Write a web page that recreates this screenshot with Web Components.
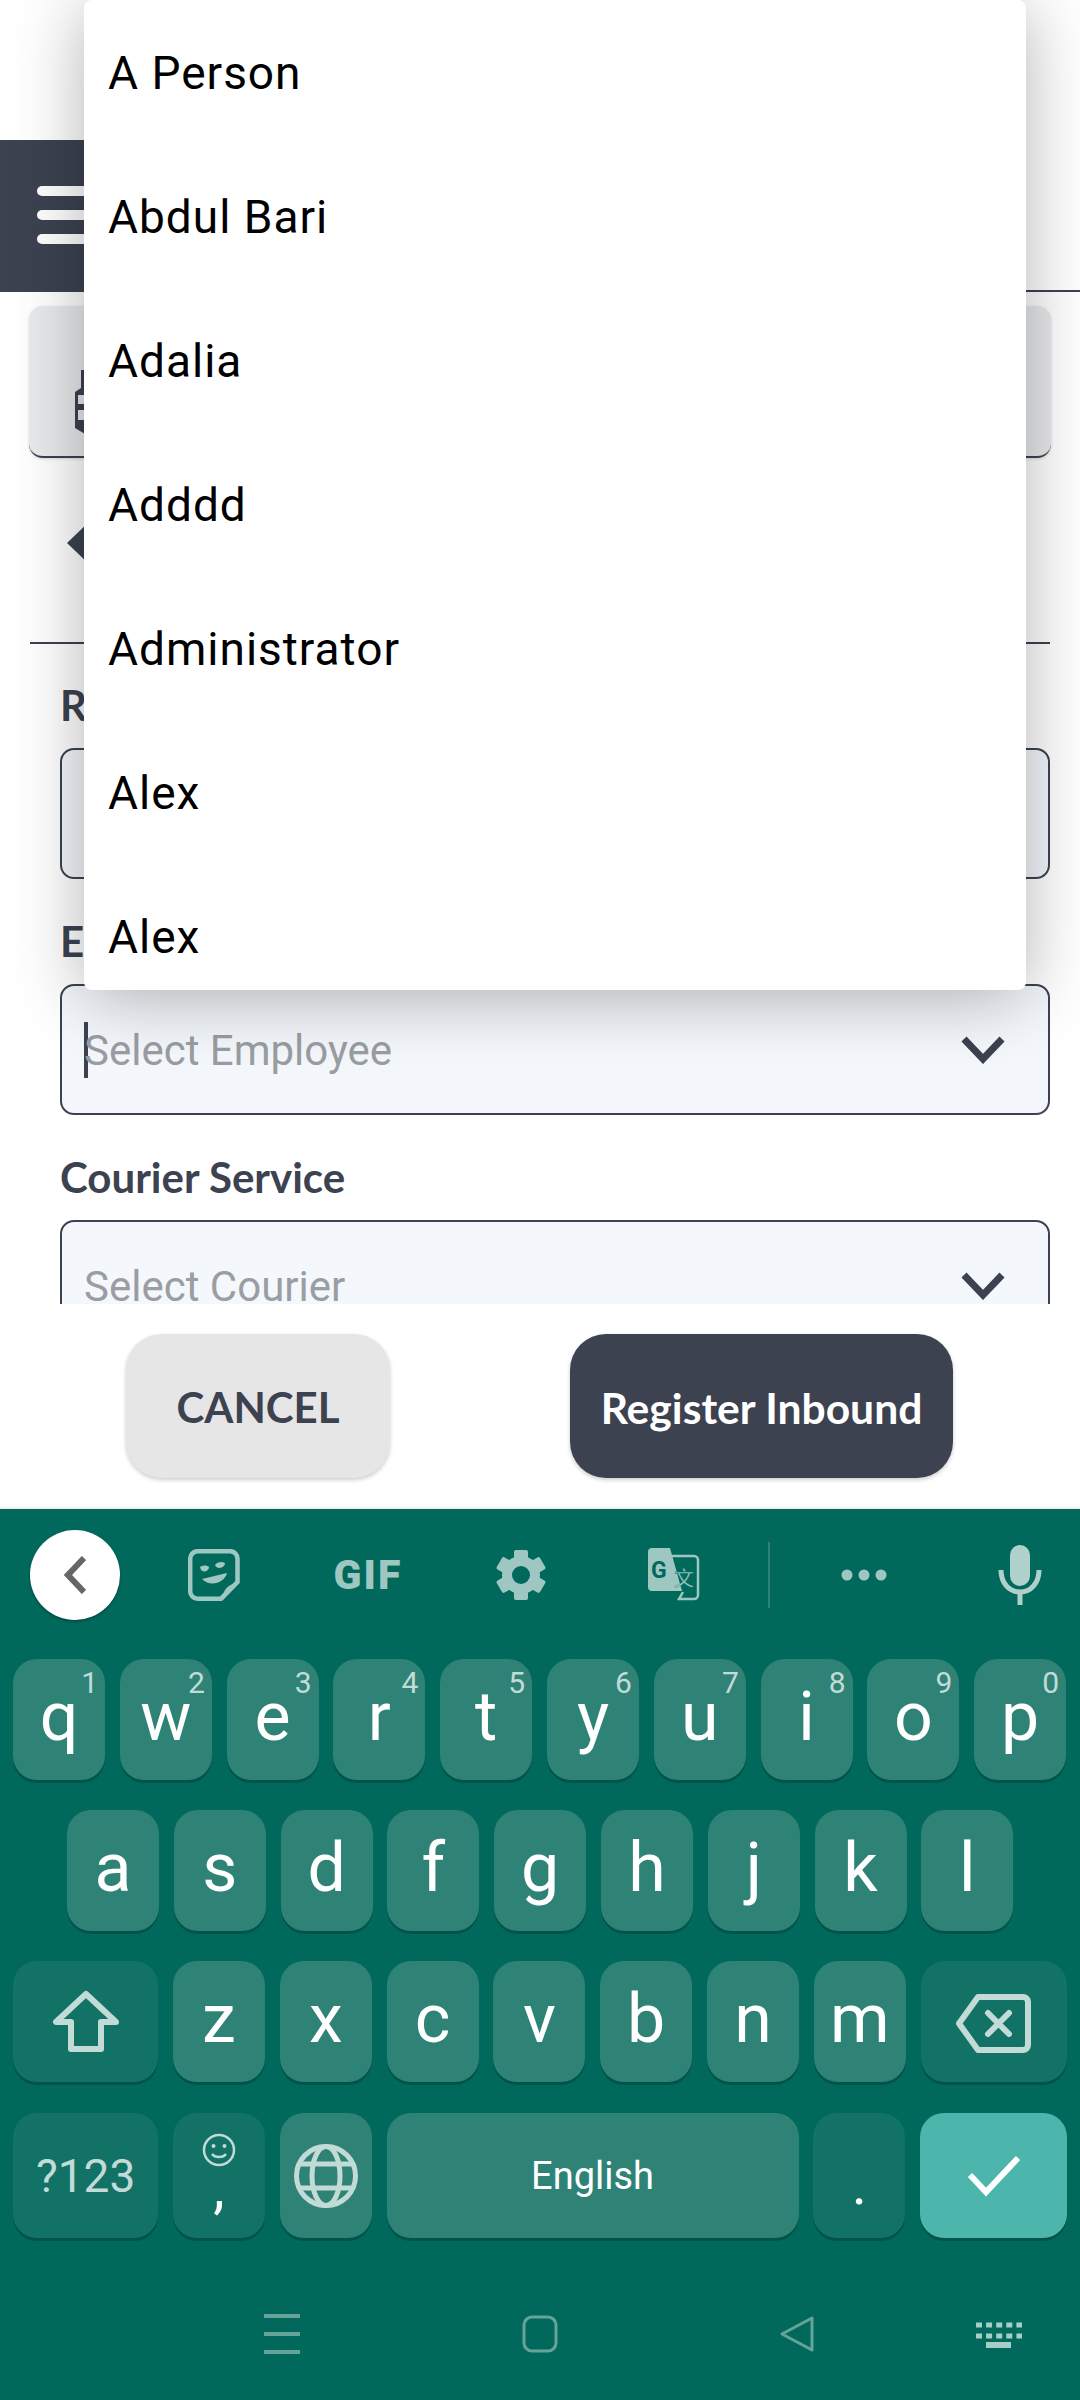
<!DOCTYPE html>
<html>
<head>
<meta charset="utf-8">
<title>Register Inbound</title>
<style>
  html, body { margin: 0; padding: 0; background: #fff; }
  body { width: 1080px; height: 2400px; position: relative; overflow: hidden; font-family: Roboto, sans-serif; }
</style>
</head>
<body>
<inbound-form>
  <form-field label="R"></form-field>
  <form-field label="E" placeholder="Select Employee" focused chevron></form-field>
  <form-field label="Courier Service" placeholder="Select Courier" chevron></form-field>
</inbound-form>

<people-dropdown>
  <people-option>A Person</people-option>
  <people-option>Abdul Bari</people-option>
  <people-option>Adalia</people-option>
  <people-option>Adddd</people-option>
  <people-option>Administrator</people-option>
  <people-option>Alex</people-option>
  <people-option>Alex</people-option>
</people-dropdown>

<soft-keyboard></soft-keyboard>

<script>
class InboundForm extends HTMLElement {
  constructor() {
    super();
    this.attachShadow({ mode: "open" });
    this.shadowRoot.innerHTML = `
      <style>
        :host { display: flex; flex-direction: column; height: 1509px; background: #fff; font-family: Lato, sans-serif; }
        .scroll { height: 1304px; overflow: hidden; padding-top: 140px; box-sizing: border-box; }
        .head { height: 152px; border-bottom: 2px solid #3c4250; box-sizing: border-box; }
        .burger { width: 128px; height: 150px; background: #3c4250; display: flex; flex-direction: column; gap: 14px; padding: 46px 0 0 37px; box-sizing: border-box; }
        .burger i { display: block; width: 80px; height: 10px; border-radius: 5px; background: #fff; }
        .card { height: 152px; margin: 14px 29px 0; background: #e8eaec; border-radius: 14px; border-bottom: 2px solid #3c4250; box-sizing: border-box; box-shadow: 0 1px 3px rgba(0,0,0,.15); padding: 64px 0 0 46px; }
        .card svg { display: block; }
        .back { height: 186px; margin: 0 30px; border-bottom: 2px solid #3c4250; box-sizing: border-box; padding: 62px 0 0 37px; }
        .back i { display: block; width: 0; height: 0; border-style: solid; border-width: 23px 24px 23px 0; border-color: transparent #3c4250 transparent transparent; }
        .fields { padding: 18px 30px 0 60px; display: flex; flex-direction: column; gap: 19px; }
        .foot { flex: 1; display: flex; padding: 30px 0 0 126px; gap: 180px; align-items: flex-start; }
        .btn { height: 144px; border-radius: 36px; display: flex; align-items: center; justify-content: center; font-weight: 700; box-shadow: 0 2px 4px rgba(0,0,0,.2); box-sizing: border-box; padding-top: 2px; }
        .cancel { width: 264px; background: #e6e6e6; color: #3c4250; font-size: 42px; }
        .save { width: 383px; background: #3c4250; color: #fff; font-size: 42.6px; }
      </style>
      <div class="scroll">
        <div class="head"><div class="burger"><i></i><i></i><i></i></div></div>
        <div class="card">
          <svg width="60" height="64" viewBox="0 0 60 64"><path d="M6 0h6v18h20v46H10L0 58V22l6-4z" fill="#3c4250"/><path d="M3 25h30v9H3zM3 40h30v10H3z" fill="#e8eaec"/></svg>
        </div>
        <div class="back"><i></i></div>
        <div class="fields"><slot></slot></div>
      </div>
      <div class="foot">
        <div class="btn cancel">CANCEL</div>
        <div class="btn save">Register Inbound</div>
      </div>
    `;
  }
}

class FormField extends HTMLElement {
  constructor() {
    super();
    this.attachShadow({ mode: "open" });
  }

  connectedCallback() {
    const label = this.getAttribute("label") || "";
    const placeholder = this.getAttribute("placeholder") || "";
    const chevron = this.hasAttribute("chevron")
      ? `<svg class="chev" width="44" height="28" viewBox="0 0 44 28"><path d="M3 3l19 20L41 3" fill="none" stroke="#3c4250" stroke-width="7"/></svg>`
      : "";
    const caret = this.hasAttribute("focused") ? `<i class="caret"></i>` : "";
    this.shadowRoot.innerHTML = `
      <style>
        :host { display: block; }
        .label { height: 86px; line-height: 86px; font-size: 42px; font-weight: 700; color: #3c4250; font-family: Lato, sans-serif; }
        .box { height: 131px; box-sizing: border-box; border: 2px solid #3c4250; border-radius: 14px; background: #f4f8fc; display: flex; align-items: center; padding: 0 43px 0 22px; font-family: Roboto, sans-serif; }
        .ph { flex: 1; font-size: 42px; color: #9a9ea2; padding-top: 2px; }
        .caret { display: block; width: 4px; height: 56px; background: #3c4250; margin-right: -4px; }
      </style>
      <div class="label">${label}</div>
      <div class="box">${caret}<span class="ph">${placeholder}</span>${chevron}</div>
    `;
  }
}

class PeopleDropdown extends HTMLElement {
  constructor() {
    super();
    this.attachShadow({ mode: "open" });
    this.shadowRoot.innerHTML = `
      <style>
        :host { display: block; position: absolute; left: 84px; top: 0; width: 942px; height: 990px; background: #fff; border-radius: 8px; box-shadow: 0 8px 70px rgba(0,0,0,.3); overflow: hidden; padding-top: 1px; box-sizing: border-box; }
      </style>
      <slot></slot>
    `;
  }
}

class PeopleOption extends HTMLElement {
  constructor() {
    super();
    this.attachShadow({ mode: "open" });
    this.shadowRoot.innerHTML = `
      <style>
        :host { display: flex; align-items: center; height: 144px; padding-left: 24px; font-family: Roboto, sans-serif; font-size: 46px; letter-spacing: 1px; color: #000; box-sizing: border-box; }
      </style>
      <slot></slot>
    `;
  }
}

class KbKey extends HTMLElement {
  constructor() {
    super();
    this.attachShadow({ mode: "open" });
  }

  connectedCallback() {
    const hint = this.getAttribute("hint");
    const w = this.getAttribute("w") || "92";
    this.shadowRoot.innerHTML = `
      <style>
        :host { display: flex; align-items: center; justify-content: center; position: relative; flex: none; height: 100%; width: ${w}px; box-sizing: border-box; border-radius: 24px; background: #2e8376; box-shadow: 0 3px 0 #00544a; color: #fff; font-family: Roboto, sans-serif; font-size: 68px; line-height: 1; padding-bottom: 6px; }
        :host([flat]) { padding-bottom: 0; }
        :host([kind="dark"]) { background: #127265; }
        :host([kind="accent"]) { background: #4db6ac; }
        .hint { position: absolute; top: 9px; right: 7px; font-size: 30px; color: #c2dbd7; line-height: 1; }
      </style>
      <slot></slot>
      ${hint ? `<span class="hint">${hint}</span>` : ""}
    `;
  }
}

class SoftKeyboard extends HTMLElement {
  constructor() {
    super();
    this.attachShadow({ mode: "open" });
  }

  _row(letters, hints) {
    return letters
      .split("")
      .map((ch, i) => `<kb-key ${hints ? `hint="${hints[i]}"` : ""}>${ch}</kb-key>`)
      .join("");
  }

  connectedCallback() {
    const tool = "#9fc7c1";
    const keyIcon = "#c2dbd7";
    const nav = "#66a398";
    this.shadowRoot.innerHTML = `
      <style>
        :host { display: block; height: 891px; background: #00695c; box-shadow: 0 -1px 3px rgba(0,0,0,.12); font-family: Roboto, sans-serif; }
        .tools { height: 150px; box-sizing: border-box; padding: 21px 0 0 30px; display: grid; grid-template-columns: 90px 187px 122px 184px 123px 66px 123px 56px 78px; grid-template-rows: 90px; }
        .tools > * { justify-self: center; align-self: center; }
        .round { width: 90px; height: 90px; border-radius: 50%; background: #fff; box-shadow: 0 2px 3px rgba(0,0,0,.25); display: flex; align-items: center; justify-content: center; }
        .gif { font: 900 41px/1 Roboto, sans-serif; color: ${tool}; letter-spacing: 2px; }
        .sep { width: 2px; height: 66px; background: #2e8376; }
        .mic { grid-column: 9; }
        .rows { display: flex; flex-direction: column; }
        .row { display: flex; gap: 14.8px; height: 121px; padding-left: 13px; margin-bottom: 30px; }
        .row.home { padding-left: 67px; }
        .row.last { height: 125px; margin-top: 1px; margin-bottom: 0; }
        .nav { height: 162px; padding-left: 200px; display: grid; grid-template-columns: 164px 352px 162px 42px 158px; align-items: center; }
        .nav > * { justify-self: center; }
        .nav svg { display: block; margin-top: 30px; }
        .small { font-size: 46px; color: ${keyIcon}; }
        .mid { font-size: 38px; }
        .stack { display: flex; flex-direction: column; align-items: center; gap: 8px; }
        .punct { font-size: 58px; line-height: 44px; }
        .comma { margin-top: -10px; margin-bottom: 10px; }
        .dot { margin-top: 17px; }
      </style>
      <div class="tools">
        <div class="round"><svg width="22" height="38" viewBox="0 0 22 38"><path d="M20 2L4 19l16 17" fill="none" stroke="#666" stroke-width="6"/></svg></div>
        <svg width="52" height="52" viewBox="0 0 52 52">
          <path d="M9.5 2.2H42a7.5 7.5 0 0 1 7.5 7.5V33L33 49.7H9.5A7.5 7.5 0 0 1 2.2 42V9.5A7.5 7.5 0 0 1 9.5 2.2z" fill="none" stroke="${tool}" stroke-width="4.5"/>
          <path d="M35 51l16-17c-8 0-17 5-16 17z" fill="${tool}"/>
          <path d="M12 18c3-2 7-2 9 0 0 5-8 7-9 0zM27 16c2-3 7-4 10-2 0 5-8 7-10 2zM14 30l25-6c-2 9-16 15-25 6z" fill="${tool}"/>
        </svg>
        <span class="gif">GIF</span>
        <svg width="50" height="52" viewBox="0 0 50 52">
          <g fill="${tool}"><circle cx="25" cy="26" r="19"/><rect x="18" y="1" width="14" height="50" rx="2"/><rect x="18" y="1" width="14" height="50" rx="2" transform="rotate(60 25 26)"/><rect x="18" y="1" width="14" height="50" rx="2" transform="rotate(120 25 26)"/></g>
          <circle cx="25" cy="26" r="9" fill="#00695c"/>
        </svg>
        <svg width="54" height="54" viewBox="0 0 54 54">
          <path d="M24 8h22a4 4 0 0 1 4 4v35a4 4 0 0 1-4 4H31l4-7" fill="none" stroke="${tool}" stroke-width="2.5"/>
          <path d="M4 0h18l12 43H4a4 4 0 0 1-4-4V4a4 4 0 0 1 4-4z" fill="${tool}"/>
          <text x="3" y="30" font-family="Roboto, sans-serif" font-weight="700" font-size="23" fill="#00695c">G</text>
          <text x="26" y="38" font-family="'Noto Sans CJK SC', sans-serif" font-size="20" fill="${tool}" stroke="#00695c" stroke-width=".3">文</text>
        </svg>
        <i class="sep"></i>
        <svg width="46" height="12" viewBox="0 0 46 12"><g fill="${tool}"><circle cx="6" cy="6" r="5.5"/><circle cx="23" cy="6" r="5.5"/><circle cx="40" cy="6" r="5.5"/></g></svg>
        <svg class="mic" width="44" height="60" viewBox="0 0 44 60"><rect x="12" y="0" width="20" height="41" rx="10" fill="#b0d0cb"/><path d="M3 25c0 13 8 22 19 22s19-9 19-22M22 46v14" fill="none" stroke="#b0d0cb" stroke-width="5"/></svg>
      </div>
      <div class="rows">
        <div class="row">${this._row("qwertyuiop", "1234567890")}</div>
        <div class="row home">${this._row("asdfghjkl")}</div>
        <div class="row">
          <kb-key flat kind="dark" w="145.2"><svg width="66" height="63" viewBox="0 0 66 63"><path d="M33 4L3 32h15v27h30V32h15z" fill="none" stroke="${keyIcon}" stroke-width="6" stroke-linejoin="round"/></svg></kb-key>
          ${this._row("zxcvbnm")}
          <kb-key flat kind="dark" w="146.4"><svg width="75" height="59" viewBox="0 0 75 59" style="margin-top:3px"><path d="M22 3h45a5 5 0 0 1 5 5v43a5 5 0 0 1-5 5H22L3 29.500z" fill="none" stroke="${keyIcon}" stroke-width="6" stroke-linejoin="round"/><path d="M32 19l21 21M53 19L32 40" fill="none" stroke="${keyIcon}" stroke-width="6" stroke-linecap="round"/></svg></kb-key>
        </div>
        <div class="row last">
          <kb-key flat kind="dark" w="145.2"><span class="small">?123</span></kb-key>
          <kb-key flat kind="dark"><span class="stack">
            <svg width="34" height="34" viewBox="0 0 34 34" style="display:block"><circle cx="17" cy="17" r="15" fill="none" stroke="${keyIcon}" stroke-width="2.500"/><circle cx="11.500" cy="13" r="2" fill="${keyIcon}"/><circle cx="22.500" cy="13" r="2" fill="${keyIcon}"/><path d="M10 21c3 4 11 4 14 0" fill="none" stroke="${keyIcon}" stroke-width="2.500"/></svg>
            <span class="punct comma">,</span>
          </span></kb-key>
          <kb-key flat><svg width="64" height="64" viewBox="0 0 64 64"><g fill="none" stroke="${keyIcon}" stroke-width="5"><circle cx="32" cy="32" r="29.500"/><ellipse cx="32" cy="32" rx="14" ry="29.500"/><path d="M6 20h52M6 44h52"/></g></svg></kb-key>
          <kb-key flat w="412"><span class="mid">English</span></kb-key>
          <kb-key flat kind="dark"><span class="punct dot">.</span></kb-key>
          <kb-key flat kind="accent" w="147"><svg width="54" height="42" viewBox="0 0 54 42"><path d="M3 20l16 17L51 3" fill="none" stroke="#fff" stroke-width="6"/></svg></kb-key>
        </div>
      </div>
      <div class="nav">
        <svg width="36" height="40" viewBox="0 0 36 40"><path d="M0 2h36M0 20h36M0 38h36" stroke="${nav}" stroke-width="4"/></svg>
        <svg width="36" height="38" viewBox="0 0 36 38"><rect x="2" y="2" width="32" height="34" rx="8" fill="none" stroke="${nav}" stroke-width="3"/></svg>
        <svg width="36" height="38" viewBox="0 0 36 38"><path d="M33 3v32L3 19z" fill="none" stroke="${nav}" stroke-width="3" stroke-linejoin="round"/></svg>
        <i></i>
        <svg width="48" height="28" viewBox="0 0 48 28"><path d="M1 5h46M1 16h46" stroke="#a6cdc7" stroke-width="5" stroke-dasharray="6 4.100"/><rect x="11" y="22" width="25" height="6" fill="#a6cdc7"/></svg>
      </div>
    `;
  }
}

customElements.define("inbound-form", InboundForm);
customElements.define("form-field", FormField);
customElements.define("people-dropdown", PeopleDropdown);
customElements.define("people-option", PeopleOption);
customElements.define("kb-key", KbKey);
customElements.define("soft-keyboard", SoftKeyboard);
</script>
</body>
</html>
